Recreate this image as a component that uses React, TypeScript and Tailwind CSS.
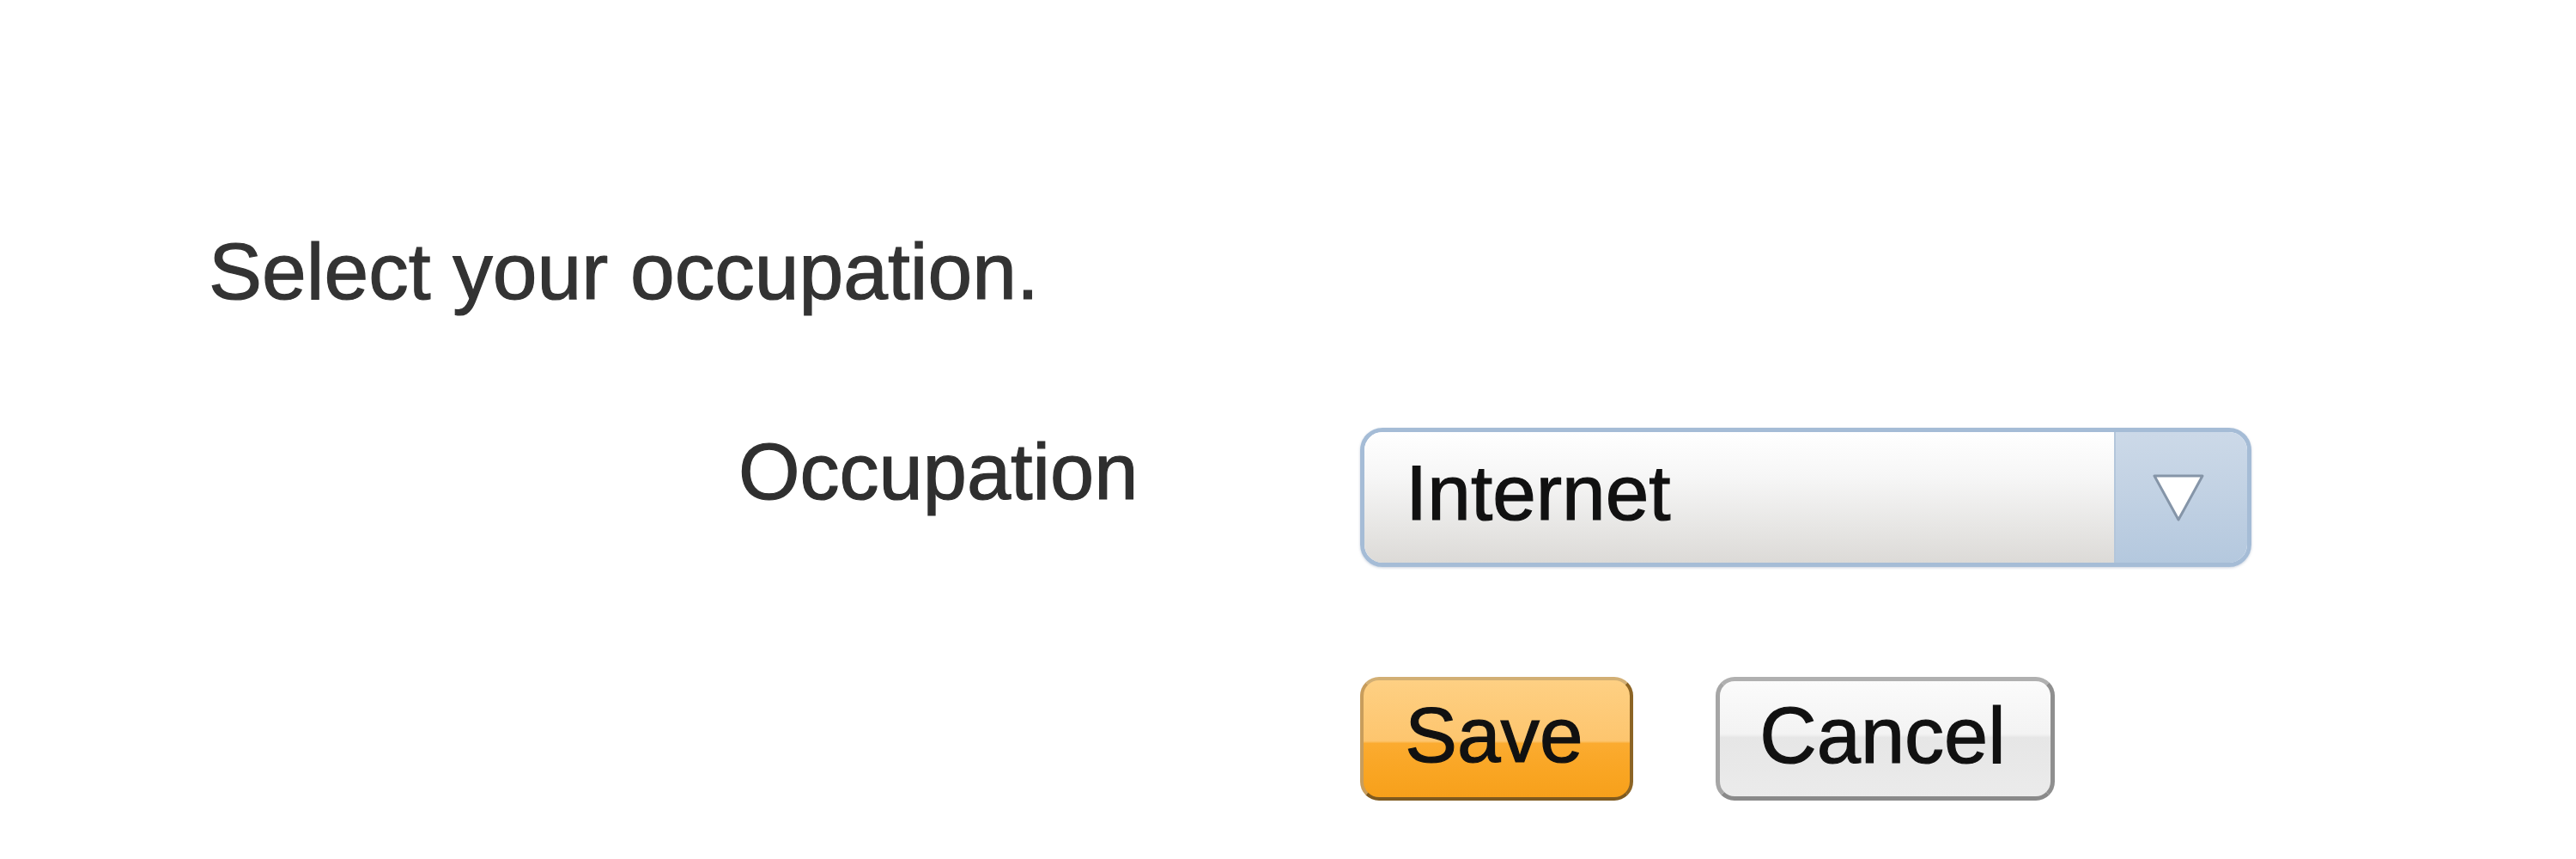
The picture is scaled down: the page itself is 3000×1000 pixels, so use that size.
import React from "react";

export default function App() {
  return (
    <div className="w-[3000px] h-[1000px] bg-white font-['Liberation_Sans',Arial,sans-serif] overflow-hidden">
      <h1 className="pt-[270px] pl-[243px] text-[93px] leading-[93px] font-normal text-[#333333] [-webkit-text-stroke:1.2px_#333333]">
        Select your occupation.
      </h1>

      <div className="mt-[135px] flex items-start pl-[860px]">
        <div className="w-[724px] pt-[5px] text-[92px] leading-[92px] text-[#2f2f2f] [-webkit-text-stroke:1.2px_#2f2f2f]">Occupation</div>
        <div className="w-[1038px] h-[162px] rounded-[26px] border-[5px] border-[#a5bcd6] flex overflow-hidden shadow-[0_1px_3px_rgba(120,140,170,0.4)]">
          <div className="flex-1 pl-[48px] pt-[25px] text-[91px] leading-[91px] text-[#111111] [-webkit-text-stroke:1.2px_#111111] bg-[linear-gradient(to_bottom,#ffffff_0%,#f6f6f6_35%,#e6e5e3_75%,#dcdad7_100%)]">
            Internet
          </div>
          <div className="w-[155px] border-l-2 border-[#b3c6db] flex items-center justify-center bg-[linear-gradient(to_bottom,#ccd9e8_0%,#c1d1e3_50%,#b4c8de_100%)]">
            <svg width="62" height="58" viewBox="0 0 62 58" className="-ml-[8px]">
              <polygon points="3,4 59,4 31,55" fill="#ffffff" stroke="#8595a8" strokeWidth="3" strokeLinejoin="round" />
            </svg>
          </div>
        </div>
      </div>

      <div className="mt-[128px] flex items-start pl-[1584px] gap-[96px]">
        <div className="w-[318px] h-[144px] rounded-[22px] border-4 border-t-[#d2af74] border-l-[#c89d5c] border-r-[#8c6424] border-b-[#7f5a1f] flex justify-center pt-[18px] pr-[6px] text-[91px] leading-[91px] text-[#111111] [-webkit-text-stroke:1.2px_#111111] bg-[linear-gradient(to_bottom,#fed083_0%,#fdc56e_52%,#fbab30_54%,#f9a522_80%,#f7a01b_100%)]">
          Save
        </div>
        <div className="w-[395px] h-[144px] rounded-[22px] border-[5px] border-t-[#b0b0b0] border-l-[#a6a6a6] border-r-[#8f8f8f] border-b-[#8a8a8a] flex justify-center pt-[17px] pr-[6px] text-[92px] leading-[92px] text-[#111111] [-webkit-text-stroke:1.2px_#111111] bg-[linear-gradient(to_bottom,#fbfbfb_0%,#f3f3f3_46%,#e6e6e6_49%,#ebebeb_100%)]">
          Cancel
        </div>
      </div>
    </div>
  );
}
